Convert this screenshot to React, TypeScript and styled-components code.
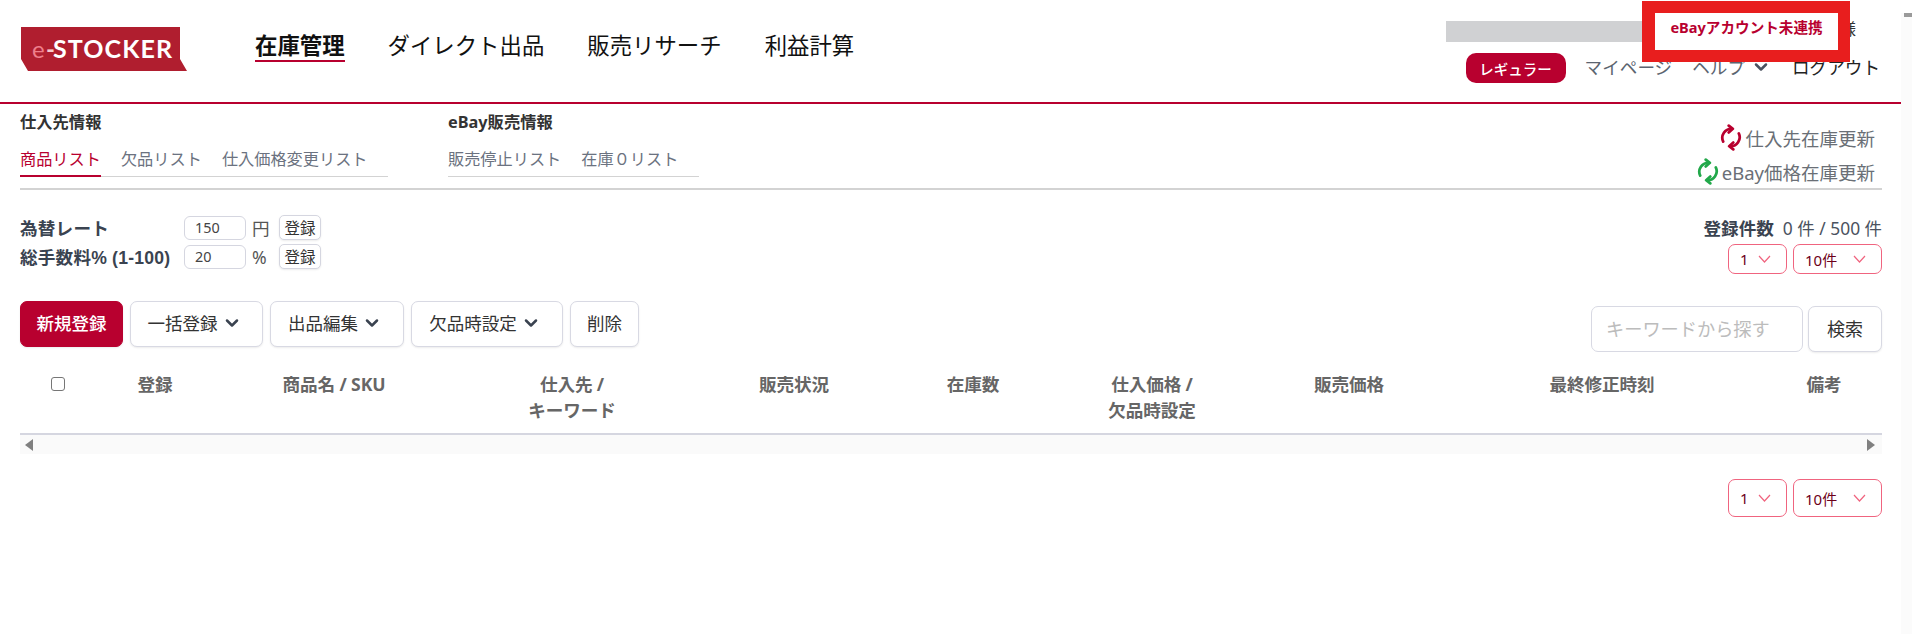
import React from "react";
import styled, { createGlobalStyle } from "styled-components";
import { ChevronDown } from "lucide-react";

const FONT = `"Noto Sans", "Noto Sans CJK JP", "Liberation Sans", sans-serif`;
const RED = "#b8002f";

const Global = createGlobalStyle`
  html, body { margin: 0; padding: 0; background: #fff; overflow: hidden; }
  body { font-family: ${FONT}; color: #3a4350; }
  * { box-sizing: border-box; }
`;

const Page = styled.div`
  display: flex;
  width: 1912px;
  height: 634px;
  overflow: hidden;
  position: relative;
`;
const Main = styled.div`
  width: 1901px;
  flex: none;
`;
const ScrollRail = styled.div`
  flex: 1;
  margin-top: 13px;
  background: #fbfbfb;
`;
const RailThumb = styled.div`
  height: 4px;
  margin-left: 3px;
  background: #9a9a9a;
`;

const Header = styled.header`
  height: 104px;
  display: flex;
  align-items: flex-start;
  border-bottom: 2px solid ${RED};
  padding: 27px 21px 0 21px;
  position: relative;
`;
const LogoBox = styled.svg`
  width: 166px;
  height: 44px;
  flex: none;
`;
const Nav = styled.nav`
  display: flex;
  gap: 43px;
  margin-left: 68px;
`;
const NavItem = styled.a<{ $active?: boolean }>`
  font-size: 22.4px;
  line-height: 30px;
  height: 31px;
  margin-top: 4px;
  color: #111;
  white-space: nowrap;
  font-weight: ${(p) => (p.$active ? 700 : 400)};
  border-bottom: ${(p) => (p.$active ? `2px solid ${RED}` : "2px solid transparent")};
`;
const UserArea = styled.div`
  margin-left: auto;
  margin-top: 26px;
  display: flex;
  align-items: center;
  height: 30px;
`;
const Plan = styled.span`
  width: 100px;
  height: 30px;
  border-radius: 10px;
  background: ${RED};
  color: #fff;
  font-size: 14.5px;
  font-weight: 500;
  display: flex;
  align-items: center;
  justify-content: center;
  margin-right: 19px;
`;
const UserLink = styled.a<{ $dark?: boolean }>`
  font-size: 17.6px;
  line-height: 28px;
  height: 28px;
  margin-bottom: 2px;
  color: ${(p) => (p.$dark ? "#222" : "#5b6470")};
  display: flex;
  align-items: center;
  gap: 6px;
  margin-right: 20px;
  white-space: nowrap;
  &:last-child { margin-right: 0; margin-left: 1px; }
`;
const Redacted = styled.div`
  position: absolute;
  left: 1446px;
  top: 21px;
  width: 219px;
  height: 21px;
  background: #d0d1d3;
`;
const Honorific = styled.span`
  position: absolute;
  left: 1840px;
  top: 18px;
  font-size: 16px;
  line-height: 22px;
  color: #333;
`;
const Callout = styled.div`
  position: absolute;
  left: 1642px;
  top: 1px;
  width: 208px;
  height: 61px;
  border: 12px solid #e81e1e;
  border-left-width: 13px;
  background: #fff;
  color: ${RED};
  font-size: 14.6px;
  font-weight: 700;
  display: flex;
  align-items: center;
  justify-content: center;
  white-space: nowrap;
  padding-bottom: 10px;
`;

const Body = styled.div`
  padding: 0 19px 0 20px;
`;
const TabsBar = styled.div`
  height: 86px;
  display: flex;
  border-bottom: 2px solid #d3d3d3;
  position: relative;
`;
const TabGroup = styled.div<{ $width: number; $gap: number }>`
  width: ${(p) => p.$width}px;
  margin-right: ${(p) => p.$gap}px;
  flex: none;
`;
const GroupTitle = styled.div`
  font-size: 16.3px;
  font-weight: 700;
  line-height: 24px;
  margin-top: 6px;
  margin-bottom: 9px;
  color: #333;
`;
const TabRow = styled.div`
  display: flex;
  gap: 20px;
  height: 34px;
  border-bottom: 1px solid #d3d3d3;
`;
const Tab = styled.a<{ $active?: boolean }>`
  font-size: 16.2px;
  line-height: 32px;
  height: 34px;
  white-space: nowrap;
  color: ${(p) => (p.$active ? RED : "#6b7280")};
  border-bottom: ${(p) => (p.$active ? `2px solid ${RED}` : "none")};
`;
const SyncCol = styled.div`
  margin-left: auto;
  display: flex;
  flex-direction: column;
  align-items: flex-end;
  padding: 19px 7px 0 0;
  gap: 5px;
`;
const SyncLink = styled.a`
  display: flex;
  align-items: center;
  gap: 3px;
  height: 29px;
  font-size: 18.5px;
  color: #6a6f76;
  white-space: nowrap;
`;

const SettingsRow = styled.div`
  display: flex;
  justify-content: space-between;
  margin-top: 26px;
  height: 58px;
`;
const RateList = styled.div`
  display: flex;
  flex-direction: column;
  gap: 6px;
`;
const RateRow = styled.div`
  display: flex;
  align-items: center;
  height: 23px;
`;
const RateLabel = styled.label`
  width: 164px;
  font-family: "Liberation Sans", "Noto Sans CJK JP", sans-serif;
  font-size: 17.6px;
  font-weight: 700;
  letter-spacing: 0.2px;
  color: #3a4350;
  white-space: nowrap;
`;
const RateInput = styled.div`
  width: 62px;
  height: 24px;
  border: 1px solid #d5d6e0;
  border-radius: 6px;
  padding-left: 10px;
  font-size: 14.4px;
  line-height: 22px;
  color: #444;
`;
const Unit = styled.span`
  width: 33px;
  padding-left: 6px;
  font-size: 17.6px;
  color: #555;
`;
const MiniButton = styled.button`
  width: 42px;
  height: 25px;
  padding: 0;
  background: #fff;
  border: 1px solid #d5d6e0;
  border-radius: 5px;
  box-shadow: 0 1px 2px rgba(0, 0, 0, 0.08);
  font: 400 15.5px ${FONT};
  color: #333;
`;
const CountCol = styled.div`
  display: flex;
  flex-direction: column;
  align-items: flex-end;
`;
const CountLine = styled.div`
  display: flex;
  align-items: center;
  height: 22px;
  gap: 9px;
  font-size: 17.4px;
  color: #4a5260;
  white-space: nowrap;
`;
const CountLabel = styled.b`
  font-size: 17.6px;
  font-weight: 700;
  color: #3a4350;
`;
const SelectRow = styled.div`
  display: flex;
  justify-content: flex-end;
  gap: 6px;
`;
const SelectBox = styled.div<{ $wide?: boolean; $tall?: boolean }>`
  width: ${(p) => (p.$wide ? 89 : 59)}px;
  height: ${(p) => (p.$tall ? 38 : 30)}px;
  border: 1px solid #f0647f;
  border-radius: 7px;
  padding: 0 15px 0 11px;
  display: flex;
  align-items: center;
  justify-content: space-between;
  font-size: 15px;
  color: #6d0019;
`;
const CountSelects = styled(SelectRow)`
  margin-top: 6px;
`;

const Toolbar = styled.div`
  display: flex;
  margin-top: 27px;
  height: 52px;
  align-items: flex-start;
  gap: 7px;
`;
const Button = styled.button<{ $primary?: boolean; $width: number; $large?: boolean }>`
  width: ${(p) => p.$width}px;
  height: 46px;
  padding: 0 0 3px;
  border-radius: 7px;
  display: flex;
  align-items: center;
  justify-content: center;
  gap: 4px;
  font: ${(p) => (p.$primary ? 500 : 400)} ${(p) => (p.$large ? 18 : 17.5)}px ${FONT};
  white-space: nowrap;
  background: ${(p) => (p.$primary ? RED : "#fff")};
  color: ${(p) => (p.$primary ? "#fff" : "#333")};
  border: 1px solid ${(p) => (p.$primary ? RED : "#d8d9e3")};
  box-shadow: 0 1px 2px rgba(0, 0, 0, 0.08);
`;
const DropIcon = styled(ChevronDown)`
  margin-right: 4px;
  flex: none;
`;
const SearchArea = styled.div`
  margin-left: auto;
  margin-top: 5px;
  display: flex;
  gap: 5px;
`;
const SearchInput = styled.div`
  width: 212px;
  height: 46px;
  border: 1px solid #d8d9e3;
  border-radius: 7px;
  padding-left: 14px;
  font-size: 18.2px;
  line-height: 44px;
  color: #bcbcbc;
  white-space: nowrap;
`;

const TableHead = styled.div`
  display: grid;
  grid-template-columns: 76px 118px 240px 236px 208px 150px 208px 186px 320px 124px;
  padding: 19px 0 10px;
  border-bottom: 2px solid #d5d6e0;
`;
const HeadCell = styled.div`
  min-height: 51px;
  text-align: center;
  font-size: 17.6px;
  font-weight: 700;
  line-height: 25.6px;
  letter-spacing: -0.1px;
  color: #666;
  white-space: pre-line;
`;
const Check = styled.span`
  display: inline-block;
  width: 14px;
  height: 14px;
  border: 1px solid #767676;
  border-radius: 3px;
  background: #fff;
  margin-top: 2px;
`;
const HScroll = styled.div`
  height: 19px;
  display: flex;
  align-items: center;
  justify-content: space-between;
  padding: 0 6px 0 0;
  background: #fafafa;
`;
const BottomSelects = styled(SelectRow)`
  margin-top: 25px;
`;
const ArrowSvg = styled.svg`
  width: 10px;
  height: 12px;
  display: block;
  margin: 0 0 0 4px;
`;
const ThinChevron = styled.svg`
  width: 13px;
  height: 8px;
  flex: none;
`;

const Logo = () => (
  <LogoBox viewBox="0 0 166 44">
    <polygon points="0,0 159,0 159,32 166,44 7,44 0,32" fill="#b01e2f" />
    <text x="11" y="31" fontFamily="Lato, sans-serif" fontSize="24" fill="#ee7f8c">e</text>
    <text x="25" y="31" fontFamily="Lato, sans-serif" fontSize="24" fontWeight="700" fill="#f6c9cd">-</text>
    <text x="32" y="31" fontFamily="Lato, sans-serif" fontSize="25" fontWeight="700" fill="#fff" textLength="119">STOCKER</text>
  </LogoBox>
);

const Sync = ({ color }: { color: string }) => (
  <svg width="22" height="27" viewBox="0 0 24 29" fill="none" stroke={color} strokeWidth="3" strokeLinecap="round" strokeLinejoin="round">
    <path d="M3.5 19 A9.8 9.8 0 0 1 13 5" />
    <path d="M9.5 1.5 L14 5 L9.5 9" />
    <path d="M20.5 10 A9.8 9.8 0 0 1 11 24" />
    <path d="M14.5 20 L10 24 L14.5 27.5" />
  </svg>
);

const Thin = () => (
  <ThinChevron viewBox="0 0 13 8" fill="none" stroke="#f0647f" strokeWidth="1.2">
    <path d="M1 1 L6.5 7 L12 1" />
  </ThinChevron>
);

const Pager = ({ tall }: { tall?: boolean }) => (
  <>
    <SelectBox $tall={tall}>1<Thin /></SelectBox>
    <SelectBox $wide $tall={tall}>10件<Thin /></SelectBox>
  </>
);

const Drop = () => <DropIcon size={20} strokeWidth={3} color="#3a4350" />;

const heads = ["", "登録", "商品名 / SKU", "仕入先 /\nキーワード", "販売状況", "在庫数", "仕入価格 /\n欠品時設定", "販売価格", "最終修正時刻", "備考"];

export default function App() {
  return (
    <Page>
      <Global />
      <Main>
        <Header>
          <Logo />
          <Nav>
            <NavItem $active>在庫管理</NavItem>
            <NavItem>ダイレクト出品</NavItem>
            <NavItem>販売リサーチ</NavItem>
            <NavItem>利益計算</NavItem>
          </Nav>
          <UserArea>
            <Plan>レギュラー</Plan>
            <UserLink>マイページ</UserLink>
            <UserLink>ヘルプ<ChevronDown size={20} strokeWidth={3} color="#4a5260" /></UserLink>
            <UserLink $dark>ログアウト</UserLink>
          </UserArea>
          <Redacted />
          <Honorific>様</Honorific>
          <Callout>eBayアカウント未連携</Callout>
        </Header>
        <Body>
          <TabsBar>
            <TabGroup $width={368} $gap={60}>
              <GroupTitle>仕入先情報</GroupTitle>
              <TabRow>
                <Tab $active>商品リスト</Tab>
                <Tab>欠品リスト</Tab>
                <Tab>仕入価格変更リスト</Tab>
              </TabRow>
            </TabGroup>
            <TabGroup $width={251} $gap={0}>
              <GroupTitle>eBay販売情報</GroupTitle>
              <TabRow>
                <Tab>販売停止リスト</Tab>
                <Tab>在庫０リスト</Tab>
              </TabRow>
            </TabGroup>
            <SyncCol>
              <SyncLink><Sync color="#b8002f" />仕入先在庫更新</SyncLink>
              <SyncLink><Sync color="#22a84a" />eBay価格在庫更新</SyncLink>
            </SyncCol>
          </TabsBar>

          <SettingsRow>
            <RateList>
              <RateRow>
                <RateLabel>為替レート</RateLabel>
                <RateInput>150</RateInput>
                <Unit>円</Unit>
                <MiniButton>登録</MiniButton>
              </RateRow>
              <RateRow>
                <RateLabel>総手数料% (1-100)</RateLabel>
                <RateInput>20</RateInput>
                <Unit>%</Unit>
                <MiniButton>登録</MiniButton>
              </RateRow>
            </RateList>
            <CountCol>
              <CountLine><CountLabel>登録件数</CountLabel>0 件 / 500 件</CountLine>
              <CountSelects><Pager /></CountSelects>
            </CountCol>
          </SettingsRow>

          <Toolbar>
            <Button $primary $width={103}>新規登録</Button>
            <Button $width={133}>一括登録<Drop /></Button>
            <Button $width={134}>出品編集<Drop /></Button>
            <Button $width={152}>欠品時設定<Drop /></Button>
            <Button $width={69}>削除</Button>
            <SearchArea>
              <SearchInput>キーワードから探す</SearchInput>
              <Button $width={74} $large>検索</Button>
            </SearchArea>
          </Toolbar>

          <TableHead>
            {heads.map((h, i) => (
              <HeadCell key={i}>{i === 0 ? <Check /> : h}</HeadCell>
            ))}
          </TableHead>
          <HScroll>
            <ArrowSvg viewBox="0 0 10 12"><polygon points="9,0 9,12 1,6" fill="#808080" /></ArrowSvg>
            <ArrowSvg viewBox="0 0 10 12"><polygon points="1,0 1,12 9,6" fill="#808080" /></ArrowSvg>
          </HScroll>
          <BottomSelects><Pager tall /></BottomSelects>
        </Body>
      </Main>
      <ScrollRail><RailThumb /></ScrollRail>
    </Page>
  );
}
